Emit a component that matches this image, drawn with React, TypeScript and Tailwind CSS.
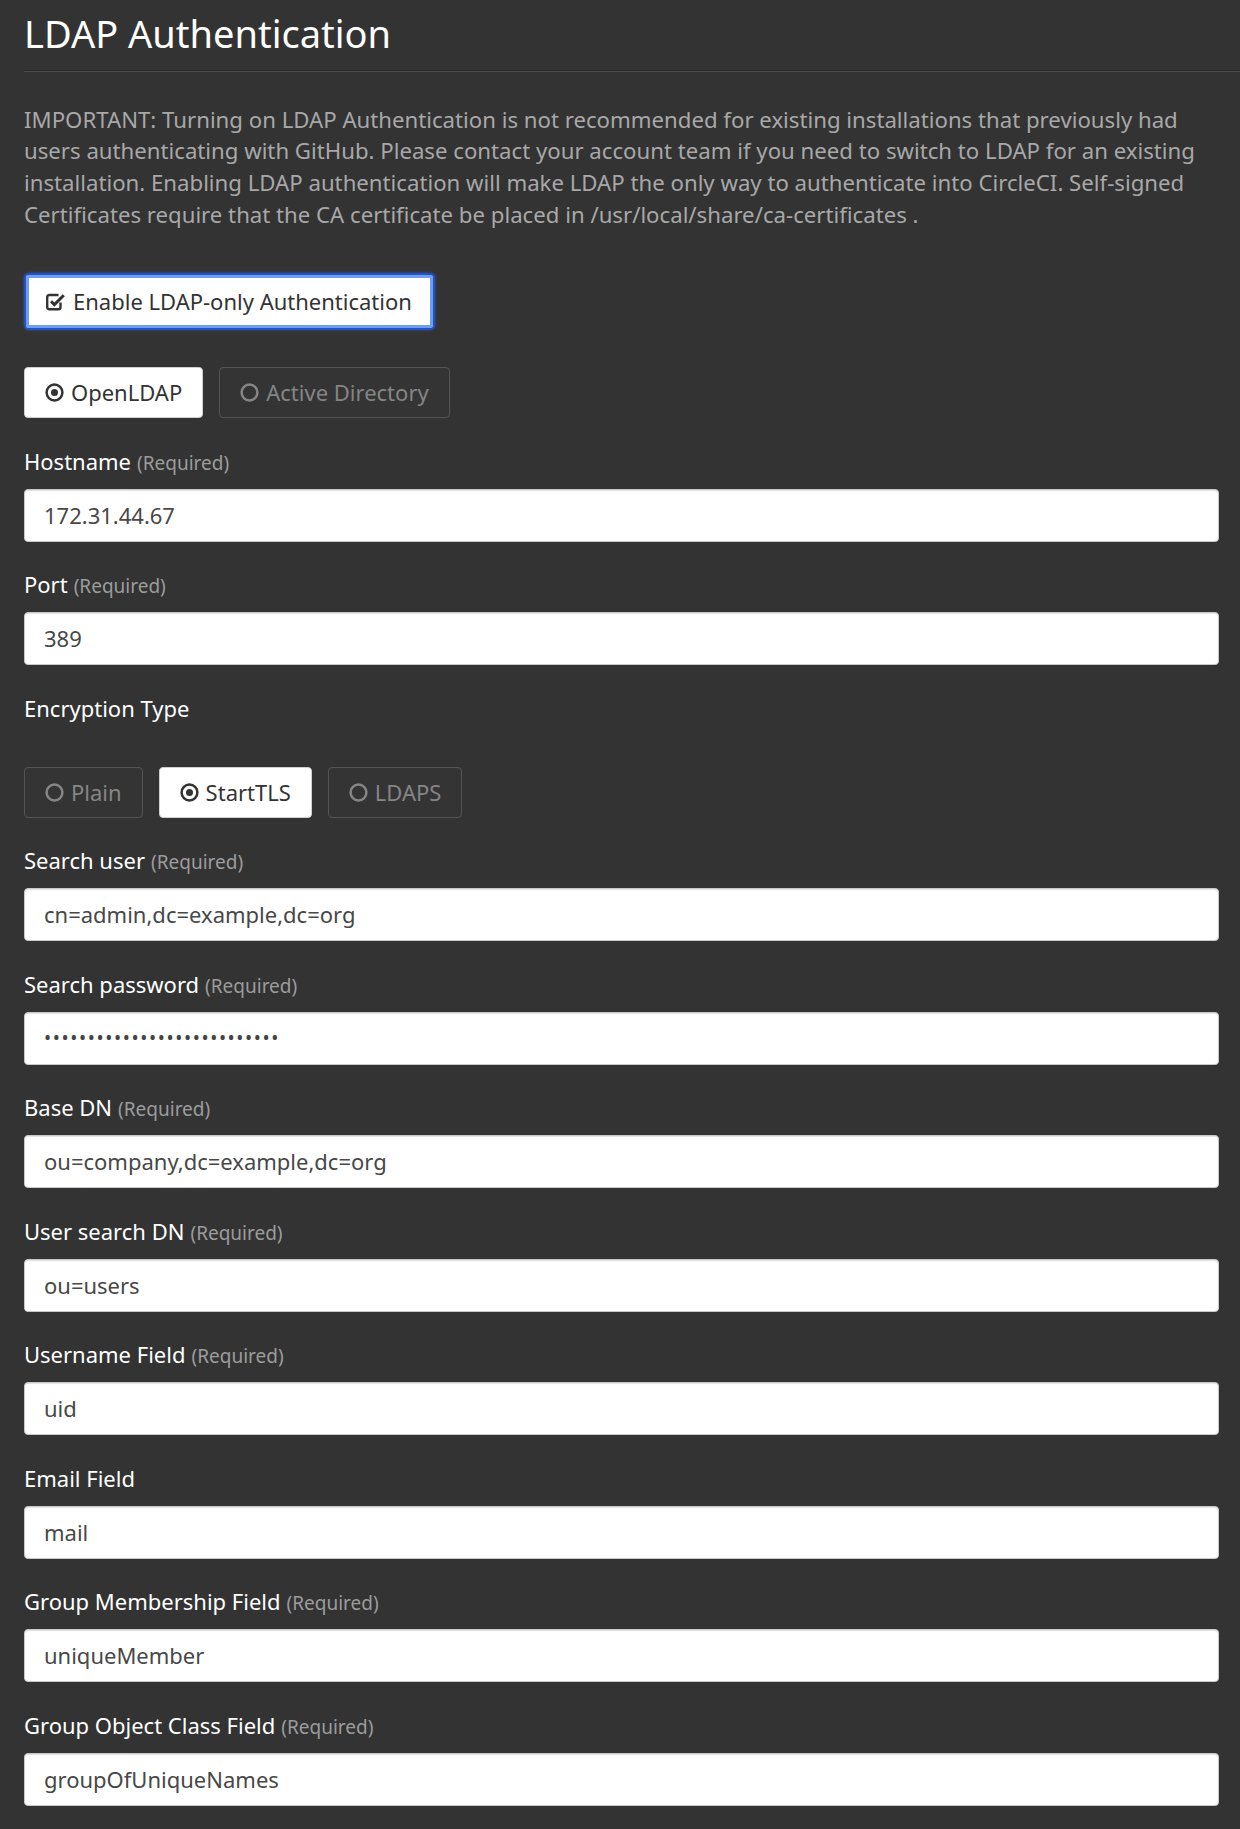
import { useState } from 'react';

const FONT = "font-['Noto_Sans','Open_Sans',sans-serif]";

function CheckSquareIcon() {
  return (
    <svg width="21" height="20" viewBox="0 0 21 20" fill="none" className="shrink-0">
      <path
        d="M15.5 10.5V15.3a2 2 0 0 1-2 2H4.2a2 2 0 0 1-2-2V5a2 2 0 0 1 2-2H13.5"
        stroke="currentColor"
        strokeWidth="2.4"
      />
      <path d="M6 9.2l3.4 3.4L18.8 3.2" stroke="currentColor" strokeWidth="3" />
    </svg>
  );
}

function RadioIcon({ checked }: { checked: boolean }) {
  return (
    <svg width="19" height="19" viewBox="0 0 19 19" className="shrink-0">
      <circle cx="9.5" cy="9.5" r="7.9" fill="none" stroke="currentColor" strokeWidth="2.5" />
      {checked && <circle cx="9.5" cy="9.5" r="3.5" fill="currentColor" />}
    </svg>
  );
}

interface RadioGroupProps {
  options: string[];
  value: string;
  onChange: (v: string) => void;
}

function RadioGroup({ options, value, onChange }: RadioGroupProps) {
  return (
    <div className="flex gap-[16px]">
      {options.map((opt) => {
        const active = opt === value;
        return (
          <button
            key={opt}
            onClick={() => onChange(opt)}
            className={
              active
                ? 'h-[51px] flex items-center gap-[7px] px-[20px] rounded-[4px] border border-[#cfcfcf] bg-white text-[#333] text-[22px]'
                : 'h-[51px] flex items-center gap-[7px] px-[20px] rounded-[4px] border border-[#545454] bg-[#343434] text-[#858585] text-[22px]'
            }
          >
            <RadioIcon checked={active} />
            <span>{opt}</span>
          </button>
        );
      })}
    </div>
  );
}

interface FieldProps {
  label: string;
  required?: boolean;
  value: string;
  password?: boolean;
}

function Field({ label, required, value, password }: FieldProps) {
  return (
    <div>
      <div className="mt-[28.5px] mb-[14px] h-[28px] leading-[28px] text-white text-[22px] whitespace-nowrap">
        {label}
        {required && <span className="ml-[6px] text-[19px] text-[#9c9c9c]">(Required)</span>}
      </div>
      <div className="h-[53px] flex items-center px-[19px] bg-white border border-[#c8c8c8] rounded-[4px] shadow-[inset_0_1px_1px_rgba(0,0,0,0.12)] text-[22px] text-[#484848]">
        {password ? (
          <span className="text-[19px] tracking-[1.6px] text-[#444] leading-none">{value.replace(/./g, '•')}</span>
        ) : (
          value
        )}
      </div>
    </div>
  );
}

export default function App() {
  const [ldapOnly] = useState(true);
  const [server, setServer] = useState('OpenLDAP');
  const [encryption, setEncryption] = useState('StartTLS');

  return (
    <div className={`${FONT} bg-[#333333] min-h-screen pl-[24px] pr-[21px] pb-[24px]`}>
      <div className="pt-[10px] pb-[15px] mr-[-21px] border-b border-[#4c4c4c] shadow-[inset_0_-1px_0_#2a2a2a]">
        <h1 className="text-[38px] leading-[46px] text-white">LDAP Authentication</h1>
      </div>

      <p className="mt-[31.5px] text-[22.2px] leading-[31.7px] text-[#a8a8a8] whitespace-nowrap">
        IMPORTANT: Turning on LDAP Authentication is not recommended for existing installations that previously had
        <br />
        users authenticating with GitHub. Please contact your account team if you need to switch to LDAP for an existing
        <br />
        installation. Enabling LDAP authentication will make LDAP the only way to authenticate into CircleCI. Self-signed
        <br />
        Certificates require that the CA certificate be placed in /usr/local/share/ca-certificates .
      </p>

      <button className="mt-[43px] h-[57px] flex items-center gap-[7px] pl-[19px] pr-[21px] rounded-[5px] bg-white text-[#333] text-[22px] border-2 border-[#1f52c6] shadow-[inset_0_0_0_3px_#6f9ef0,0_0_3px_rgba(60,110,230,0.6)]">
        {ldapOnly && <CheckSquareIcon />}
        <span>Enable LDAP-only Authentication</span>
      </button>

      <div className="mt-[37px]">
        <RadioGroup options={['OpenLDAP', 'Active Directory']} value={server} onChange={setServer} />
      </div>

      <div className="mt-[2px]">
        <Field label="Hostname" required value="172.31.44.67" />
      </div>
      <Field label="Port" required value="389" />

      <div className="mt-[29px] mb-[44.5px] h-[28px] leading-[28px] text-white text-[22px]">Encryption Type</div>
      <RadioGroup options={['Plain', 'StartTLS', 'LDAPS']} value={encryption} onChange={setEncryption} />

      <div className="mt-[5px]">
        <Field label="Search user" required value="cn=admin,dc=example,dc=org" />
      </div>
      <Field label="Search password" required value="xxxxxxxxxxxxxxxxxxxxxxxxxxx" password />
      <Field label="Base DN" required value="ou=company,dc=example,dc=org" />
      <Field label="User search DN" required value="ou=users" />
      <Field label="Username Field" required value="uid" />
      <Field label="Email Field" value="mail" />
      <Field label="Group Membership Field" required value="uniqueMember" />
      <Field label="Group Object Class Field" required value="groupOfUniqueNames" />
    </div>
  );
}
